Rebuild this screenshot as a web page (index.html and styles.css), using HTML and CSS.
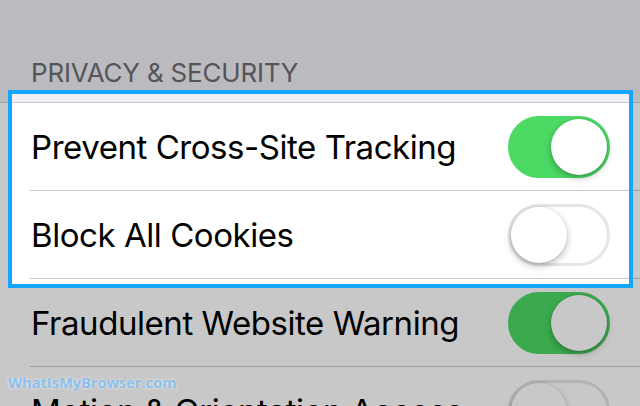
FILE: index.html
```html
<html>
    <head>
        <title>Privacy &amp; Security</title>
        <link rel="stylesheet" href="styles.css">
    </head>
    <body>
        <div class="screen">
            <div class="group-head">PRIVACY &amp; SECURITY</div>
            <div class="group">
                <div class="spot"></div>
                <div class="cell">
                    <div class="cell-inner">
                        <span class="label">Prevent Cross-Site Tracking</span>
                        <span class="switch on"><span class="knob"></span></span>
                    </div>
                </div>
                <div class="cell">
                    <div class="cell-inner">
                        <span class="label">Block All Cookies</span>
                        <span class="switch"><span class="knob"></span></span>
                    </div>
                </div>
                <div class="cell">
                    <div class="cell-inner">
                        <span class="label">Fraudulent Website Warning</span>
                        <span class="switch on"><span class="knob"></span></span>
                    </div>
                </div>
                <div class="cell">
                    <div class="cell-inner">
                        <span class="label">Motion &amp; Orientation Access</span>
                        <span class="switch"><span class="knob"></span></span>
                    </div>
                </div>
            </div>
            <div class="badge">WhatIsMyBrowser.com</div>
        </div>
    </body>
</html>
```

FILE: styles.css
```css
body {
    margin: 0;
    background-color: #efeff4;
    overflow: hidden;
    font-family: Inter, "Noto Sans", sans-serif;
}
.screen {
    position: relative;
    width: 640px;
    height: 406px;
    overflow: hidden;
}
.group-head {
    height: 102px;
    box-sizing: border-box;
    padding: 60px 0 0 31px;
    font-size: 26px;
    line-height: 26px;
    color: #6d6d72;
    letter-spacing: -0.2px;
}
.group {
    position: relative;
    background-color: #ffffff;
    border-top: 1px solid #c8c7cc;
}
.cell {
    padding-left: 30px;
}
.cell-inner {
    display: flex;
    align-items: center;
    justify-content: space-between;
    height: 87px;
    padding: 0 30px 0 1px;
    border-bottom: 1px solid #c8c7cc;
}
.label {
    font-size: 33px;
    color: #000000;
    letter-spacing: -0.45px;
}
.switch {
    position: relative;
    width: 102px;
    height: 62px;
    box-sizing: border-box;
    border-radius: 31px;
    border: 3px solid #e5e5ea;
    background-color: #ffffff;
}
.switch .knob {
    position: absolute;
    top: 0;
    left: 0;
    width: 56px;
    height: 56px;
    border-radius: 50%;
    background-color: #ffffff;
    box-shadow: 0 3px 7px rgba(0, 0, 0, 0.28), 0 0 0 1px rgba(0, 0, 0, 0.04);
}
.switch.on {
    background-color: #4cd964;
    border-color: #4cd964;
}
.switch.on .knob {
    left: 40px;
}
/* highlight around the first two rows, dims the rest */
.spot {
    position: absolute;
    top: -13px;
    left: 8px;
    right: 7px;
    height: 198px;
    box-sizing: border-box;
    border: 4px solid #14a6ff;
    box-shadow: 0 0 0 1200px rgba(0, 0, 0, 0.216);
    z-index: 2;
    pointer-events: none;
}
.badge {
    position: absolute;
    left: 8px;
    top: 372px;
    z-index: 3;
    font-family: "Open Sans", sans-serif;
    font-weight: bold;
    font-size: 14.6px;
    color: #8cc0ec;
    text-shadow: 0 0 3px rgba(255, 255, 255, 0.7);
}
```
